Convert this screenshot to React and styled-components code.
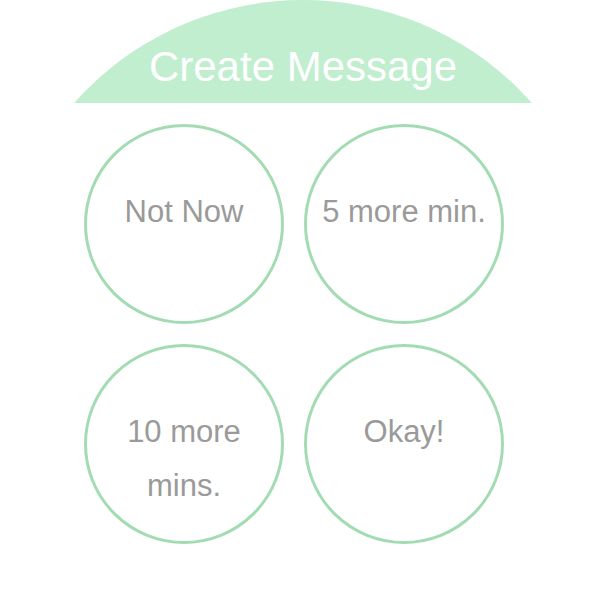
import React from 'react';
import styled, { createGlobalStyle } from 'styled-components';

const GlobalStyle = createGlobalStyle`
	html,
	body {
		margin: 0;
		padding: 0;
		background: #ffffff;
		font-family: 'Liberation Sans', Arial, sans-serif;
	}
`;

const replies = ['Not Now', '5 more min.', '10 more mins.', 'Okay!'];

const App = () => {
	return (
		<>
			<GlobalStyle />
			<StyledPage>
				<HeaderWrap>
					<Dome>
						<Title>Create Message</Title>
					</Dome>
				</HeaderWrap>
				<ReplyGrid>
					{replies.map((text) => (
						<ReplyCircle key={text}>
							<ReplyText>{text}</ReplyText>
						</ReplyCircle>
					))}
				</ReplyGrid>
			</StyledPage>
		</>
	);
};

const StyledPage = styled.div`
	width: 606px;
	height: 604px;
	overflow: hidden;
	background: #ffffff;
`;

const HeaderWrap = styled.div`
	height: 103px;
	overflow: hidden;
	display: flex;
	justify-content: center;
`;

const Dome = styled.div`
	flex: 0 0 612px;
	width: 612px;
	height: 612px;
	border-radius: 50%;
	background: #c0eecf;
	box-sizing: border-box;
	padding-top: 43px;
	text-align: center;
`;

const Title = styled.h1`
	margin: 0;
	font-size: 42px;
	font-weight: normal;
	line-height: normal;
	color: #ffffff;
`;

const ReplyGrid = styled.div`
	display: grid;
	grid-template-columns: repeat(2, 200px);
	gap: 20px;
	margin: 21px 0 0 84px;
`;

const ReplyCircle = styled.div`
	width: 200px;
	height: 200px;
	box-sizing: border-box;
	border: 3px solid #a3dcb3;
	border-radius: 50%;
	padding: 58px 12px 0;
	text-align: center;
`;

const ReplyText = styled.p`
	margin: 0;
	font-size: 31px;
	line-height: 54px;
	color: #9a9a9a;
`;

export default App;
